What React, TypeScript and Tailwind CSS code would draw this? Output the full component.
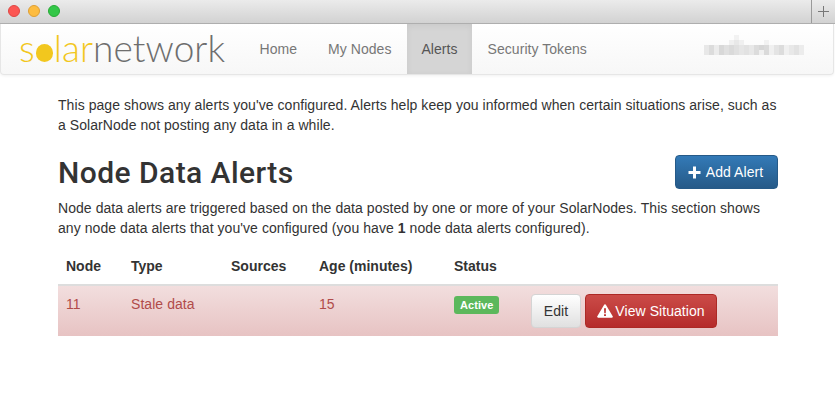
import React from 'react';

const BLUR_CELLS = [
  [0, 2, 'e8e8e8'], [1, 2, 'dcdcdc'], [2, 2, 'ececec'], [3, 2, 'd8d8d8'], [4, 2, 'e0e0e0'], [5, 1, 'f0f0f0'],
  [5, 2, 'dadada'], [6, 0, 'f2f2f2'], [6, 1, 'e8e8e8'], [6, 2, 'e0e0e0'], [7, 1, 'f0f0f0'], [7, 2, 'e6e6e6'],
  [8, 2, 'e2e2e2'], [9, 2, 'e8e8e8'], [10, 2, 'dcdcdc'], [11, 2, 'd6d6d6'], [11, 3, 'f0f0f0'], [12, 1, 'f2f2f2'], [12, 2, 'dadada'],
  [13, 2, 'f0f0f0'], [14, 2, 'e4e4e4'], [15, 2, 'dcdcdc'], [16, 2, 'f0f0f0'], [17, 2, 'e8e8e8'], [18, 2, 'e2e2e2'], [19, 2, 'ececec'],
] as const;

function BlurredEmail() {
  return (
    <svg width="100" height="20" viewBox="0 0 100 20" className="block">
      {BLUR_CELLS.map(([x, y, c], i) => (
        <rect key={i} x={x * 5} y={y * 5} width="5" height={y === 2 ? 10 : 5} fill={`#${c}`} />
      ))}
    </svg>
  );
}

function TitleBar() {
  return (
    <div className="h-[24px] flex items-center bg-gradient-to-b from-[#ebebeb] to-[#d2d2d2] border-b border-[#b0b0b0]">
      <div className="flex items-center gap-[8px] pl-[8px] pb-[1px]">
        <span className="w-[12px] h-[12px] rounded-full bg-[#fc5753] border border-[#df4744]" />
        <span className="w-[12px] h-[12px] rounded-full bg-[#fdbc40] border border-[#de9f34]" />
        <span className="w-[12px] h-[12px] rounded-full bg-[#33c748] border border-[#27aa35]" />
      </div>
      <div className="ml-auto h-full w-[24px] border-l border-[#9a9a9a] flex items-center justify-center">
        <svg width="13" height="13" viewBox="0 0 13 13">
          <path d="M6.5 1v11M1 6.5h11" stroke="#777" strokeWidth="1" />
        </svg>
      </div>
    </div>
  );
}

function Navbar() {
  const links = ['Home', 'My Nodes', 'Alerts', 'Security Tokens'];
  return (
    <div className="h-[51px] mr-[1px] flex bg-gradient-to-b from-white to-[#f7f7f7] border border-t-0 border-[#e6e6e6] rounded-b-[4px] shadow-[0_1px_3px_rgba(0,0,0,0.06)]">
      <div className="w-[243px] pl-[18px] font-['Lato',sans-serif] font-light text-[37px] leading-[48px] tracking-[0.05px] text-[#6e6e6e] flex">
        <span className="text-[#f2c71e]">s</span>
        <span className="w-[17px] h-[18px] rounded-full bg-[#f2c71e] mt-[20px] mx-[1px]" />
        <span className="text-[#f2c71e]">lar</span>
        <span>network</span>
      </div>
      {links.map((link) => (
        <a
          key={link}
          className={
            link === 'Alerts'
              ? 'px-[14.5px] leading-[50px] text-[14px] tracking-[0.05px] text-[#555555] bg-[#d5d5d5] shadow-[inset_0_2px_6px_rgba(0,0,0,0.06)]'
              : 'px-[15.5px] leading-[50px] text-[14px] tracking-[0.05px] text-[#777777]'
          }
        >
          {link}
        </a>
      ))}
      <div className="ml-auto mr-[29px] pt-[11px]">
        <BlurredEmail />
      </div>
    </div>
  );
}

function AlertsTable() {
  return (
    <div className="mt-[8px] text-[14px]">
      <div className="h-[38px] grid grid-cols-[65px_100px_88px_135px_77px_1fr] px-[8px] pt-[2px] items-center font-bold text-[#333333] tracking-normal">
        <span>Node</span>
        <span>Type</span>
        <span>Sources</span>
        <span>Age (minutes)</span>
        <span>Status</span>
      </div>
      <div className="h-[52px] grid grid-cols-[65px_100px_88px_135px_77px_1fr] px-[8px] pt-[8px] border-t-2 border-[#dddddd] bg-gradient-to-b from-[#f2dede] to-[#e7c3c3] text-[#b14b4a]">
        <span>11</span>
        <span>Stale data</span>
        <span />
        <span>15</span>
        <span>
          <span className="inline-block align-top h-[18px] px-[6px] mt-[2px] rounded-[3px] bg-[#5cb85c] text-white text-[11px] font-bold leading-[18px]">
            Active
          </span>
        </span>
        <div className="flex gap-[4px]">
          <button className="w-[50px] h-[34px] rounded-[4px] border border-[#d4d4d4] bg-gradient-to-b from-white to-[#e0e0e0] text-[#333333]">
            Edit
          </button>
          <button className="w-[132px] h-[34px] rounded-[4px] border border-[#ac2925] bg-gradient-to-b from-[#cb4b48] to-[#b52b2b] text-white flex items-center justify-center gap-[2px]">
            <svg width="16" height="14" viewBox="0 0 16 14">
              <path d="M8 0.3c.5 0 .8.2 1 .6l6.7 11.4c.4.7 0 1.5-.9 1.5H1.2c-.9 0-1.3-.8-.9-1.5L7 .9c.2-.4.5-.6 1-.6z" fill="#fff" />
              <path d="M7 4.2h2l-.25 5h-1.5zM7 10.2h2v1.9H7z" fill="#c03a38" />
            </svg>
            View Situation
          </button>
        </div>
      </div>
    </div>
  );
}

export default function App() {
  return (
    <div className="w-[835px] h-[404px] overflow-hidden bg-white font-['Liberation_Sans',Arial,sans-serif] text-[#333333]">
      <TitleBar />
      <Navbar />
      <main className="w-[722px] ml-[58px] pt-[20px] text-[14px] leading-[20px] tracking-[0.06px]">
        <p className="w-[720px]">
          This page shows any alerts you've configured. Alerts help keep you informed when certain situations arise, such as a SolarNode not posting any data in a while.
        </p>
        <div className="w-[720px] mt-[20px] flex items-start justify-between">
          <h2 className="font-['Roboto',sans-serif] text-[30px] leading-[33px] mt-[1px] font-medium tracking-[0.45px]">Node Data Alerts</h2>
          <button className="w-[103px] h-[34px] pr-[2px] rounded-[4px] border border-[#265a88] bg-gradient-to-b from-[#337ab7] to-[#265a88] text-white flex items-center justify-center gap-[5px]">
            <svg width="13" height="13" viewBox="0 0 13 13">
              <path d="M5 .5h3V5h4.5v3H8v4.5H5V8H.5V5H5z" fill="#fff" />
            </svg>
            Add Alert
          </button>
        </div>
        <p className="w-[720px] mt-[9px]">
          Node data alerts are triggered based on the data posted by one or more of your SolarNodes. This section shows any node data alerts that you've configured (you have <b>1</b> node data alerts configured).
        </p>
        <div className="w-[720px]">
          <AlertsTable />
        </div>
      </main>
    </div>
  );
}
